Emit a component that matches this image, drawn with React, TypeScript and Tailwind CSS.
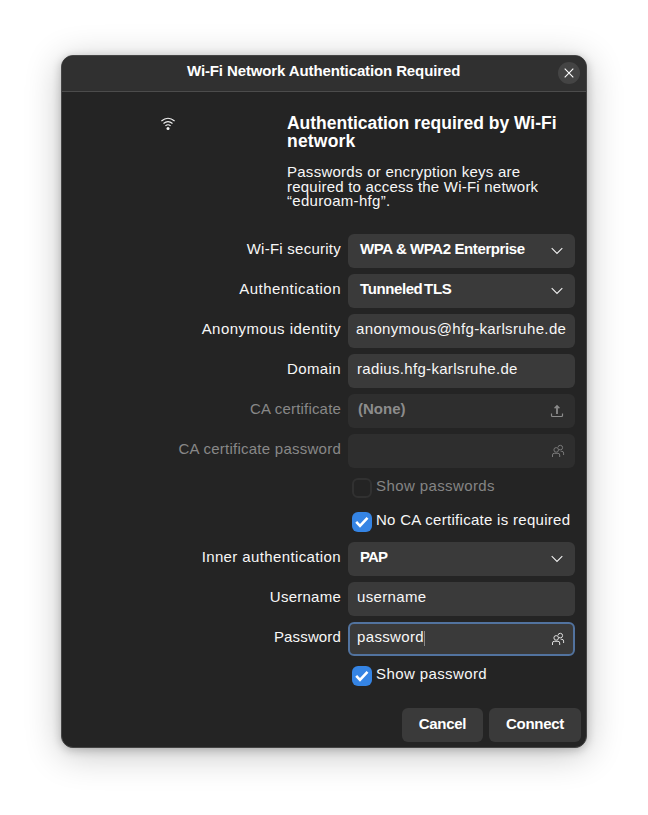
import type { ReactNode } from 'react';

const PeopleIcon = ({ className = '' }: { className?: string }) => (
  <svg className={className} width="14" height="14" viewBox="0 0 14 14" fill="none" stroke="currentColor" strokeWidth="1">
    <circle cx="5.2" cy="5.9" r="2.3" />
    <path d="M1.5 13V11Q1.5 9.3 3.2 9.3H7Q8.7 9.3 8.7 11V13" />
    <path d="M7 3.4A2.3 2.3 0 1 1 9.3 5.9L8 5.5" />
    <path d="M9.7 7.3H10.9Q12.6 7.4 12.6 9.1V11" />
  </svg>
);

const UploadIcon = () => (
  <svg width="14" height="14" viewBox="0 0 14 14" fill="none" stroke="currentColor">
    <path d="M7 10V2.5" strokeWidth="1.8" />
    <path d="M4.6 4.2L7 1.8L9.4 4.2" strokeWidth="1.4" />
    <path d="M1.5 9.5V11.5Q1.5 12.5 2.5 12.5H11.5Q12.5 12.5 12.5 11.5V9.5" strokeWidth="1.2" />
  </svg>
);

const Chevron = () => (
  <svg width="12" height="8" viewBox="0 0 12 8" fill="none" stroke="#f0f0f0" strokeWidth="1.1">
    <path d="M0.7 1.2L6 6.5L11.3 1.2" />
  </svg>
);

const Row = ({ label, track = 'tracking-[0.25px]', dim = false, children }: { label: string; track?: string; dim?: boolean; children: ReactNode }) => (
  <div className="flex h-[34px] gap-[7px]">
    <div className={`flex w-[279px] items-center justify-end pb-[5px] whitespace-nowrap ${track} ${dim ? 'text-[#888888]' : ''}`}>{label}</div>
    {children}
  </div>
);

const Select = ({ value, track }: { value: string; track: string }) => (
  <button className="flex w-[227px] items-center justify-between rounded-md bg-[#3a3a3a] px-3 font-bold text-white">
    <span className={`pb-[5px] whitespace-nowrap ${track}`}>{value}</span>
    <Chevron />
  </button>
);

const Check = ({ label, track, checked = false }: { label: string; track: string; checked?: boolean }) => (
  <div className={`ml-[290px] flex h-5 gap-1 whitespace-nowrap ${checked ? '' : 'text-[#858585]'}`}>
    <span className={`flex size-5 shrink-0 items-center justify-center rounded-md ${checked ? 'bg-[#3584e4]' : 'border-2 border-[#313131]'}`}>
      {checked && (
        <svg width="14" height="12" viewBox="0 0 14 12" fill="none" stroke="#fff" strokeWidth="2.6">
          <path d="M1.2 5.8L5 9.8L12.5 1.8" />
        </svg>
      )}
    </span>
    <span className={`-mt-0.5 leading-5 ${track}`}>{label}</span>
  </div>
);

export default function App() {
  return (
    <main className="flex h-[815px] w-[648px] justify-center overflow-hidden bg-white pt-[55px] font-['Liberation_Sans',Arial,sans-serif] text-[15px] leading-5 text-[#f7f7f7]">
      <section className="h-[693px] w-[526px] overflow-hidden rounded-xl border border-[#454545] bg-[#242424] shadow-[0_6px_36px_rgba(0,0,0,0.24),0_2px_10px_rgba(0,0,0,0.22)]">
        <header className="flex h-9 items-center border-b border-[#4c4c4c] bg-[#303030] pr-1.5 pb-px pl-[125px]">
          <h1 className="flex-1 pb-1 font-bold whitespace-nowrap text-white tracking-[-0.12px]">Wi-Fi Network Authentication Required</h1>
          <button className="flex size-[22px] items-center justify-center rounded-full bg-[#444444]" aria-label="Close">
            <svg width="10" height="10" viewBox="0 0 10 10" stroke="#fff" strokeWidth="1.1"><path d="M.7.7L9.3 9.3M9.3.7L.7 9.3" /></svg>
          </button>
        </header>

        <div className="flex h-[142px] pt-[22px]">
          <div className="w-[225px] pt-[3px] pl-[99px]">
            <svg width="14" height="14" viewBox="0 0 14 14" fill="none" stroke="#f2f2f2" strokeWidth="1.1">
              <path d="M.4 4Q7-1.4 13.6 4" />
              <path d="M2.5 6.5Q7 2.7 11.5 6.5" />
              <path d="M4.4 8.9Q7 6.7 9.6 8.9" />
              <circle cx="7" cy="11.4" r="1.5" fill="#f2f2f2" stroke="none" />
            </svg>
          </div>
          <div className="whitespace-nowrap">
            <h2 className="text-[17.5px] leading-[18px] font-bold text-white">
              <span className="block tracking-[-0.02px]">Authentication required by Wi-Fi</span>
              <span className="block tracking-[0.2px]">network</span>
            </h2>
            <p className="mt-[15px] leading-[14.7px]">
              <span className="block tracking-[0.26px]">Passwords or encryption keys are</span>
              <span className="block tracking-[0.22px]">required to access the Wi-Fi network</span>
              <span className="block tracking-[0.3px]">“eduroam-hfg”.</span>
            </p>
          </div>
        </div>

        <form className="flex flex-col gap-1.5">
          <Row label="Wi-Fi security"><Select value="WPA & WPA2 Enterprise" track="tracking-[-0.4px]" /></Row>
          <Row label="Authentication" track="tracking-[0.48px]"><Select value="Tunneled TLS" track="tracking-[-0.4px] [word-spacing:-2px]" /></Row>
          <Row label="Anonymous identity" track="tracking-[0.47px]">
            <div className="flex w-[227px] items-center rounded-md bg-[#3a3a3a] pb-[5px] pl-2 whitespace-nowrap tracking-[0.35px]">anonymous@hfg-karlsruhe.de</div>
          </Row>
          <Row label="Domain" track="tracking-[0.4px]">
            <div className="flex w-[227px] items-center rounded-md bg-[#3a3a3a] pb-[5px] pl-[9px] tracking-[0.32px]">radius.hfg-karlsruhe.de</div>
          </Row>
          <Row label="CA certificate" track="tracking-[0.18px]" dim>
            <div className="flex w-[227px] items-center justify-between rounded-md bg-[#2e2e2e] pr-[11px] pl-2.5 font-bold text-[#8c8c8c]">
              <span className="pb-[5px]">(None)</span><UploadIcon />
            </div>
          </Row>
          <Row label="CA certificate password" dim>
            <div className="flex w-[227px] items-center justify-end rounded-md bg-[#2e2e2e] pr-2.5 text-[#7a7a7a]"><PeopleIcon /></div>
          </Row>
          <div className="flex h-[62px] flex-col gap-[14px] pt-1">
            <Check label="Show passwords" track="tracking-[0.4px]" />
            <Check label="No CA certificate is required" track="tracking-[0.29px]" checked />
          </div>
          <Row label="Inner authentication" track="tracking-[0.38px]"><Select value="PAP" track="tracking-[-0.8px]" /></Row>
          <Row label="Username">
            <div className="flex w-[227px] items-center rounded-md bg-[#3a3a3a] pb-[5px] pl-[9px] tracking-[0.35px]">username</div>
          </Row>
          <Row label="Password" track="tracking-[0.15px]">
            <div className="flex w-[227px] items-center justify-between rounded-md border-2 border-[#52739f] bg-[#3a3a3a] pr-2 pl-[7px]">
              <span className="flex pb-[5px] tracking-[0.35px]">password<span className="mt-1 h-[15px] w-px bg-[#888888]" /></span>
              <PeopleIcon className="text-[#dedede]" />
            </div>
          </Row>
          <div className="pt-1"><Check label="Show password" track="tracking-[0.4px]" checked /></div>
        </form>

        <footer className="mt-[22px] flex justify-end gap-1.5 pr-[5px] font-bold text-white tracking-[-0.3px]">
          <button className="h-[34px] w-[81px] rounded-md bg-[#3a3a3a] pb-[3px]">Cancel</button>
          <button className="h-[34px] w-[92px] rounded-md bg-[#3a3a3a] pb-[3px]">Connect</button>
        </footer>
      </section>
    </main>
  );
}
